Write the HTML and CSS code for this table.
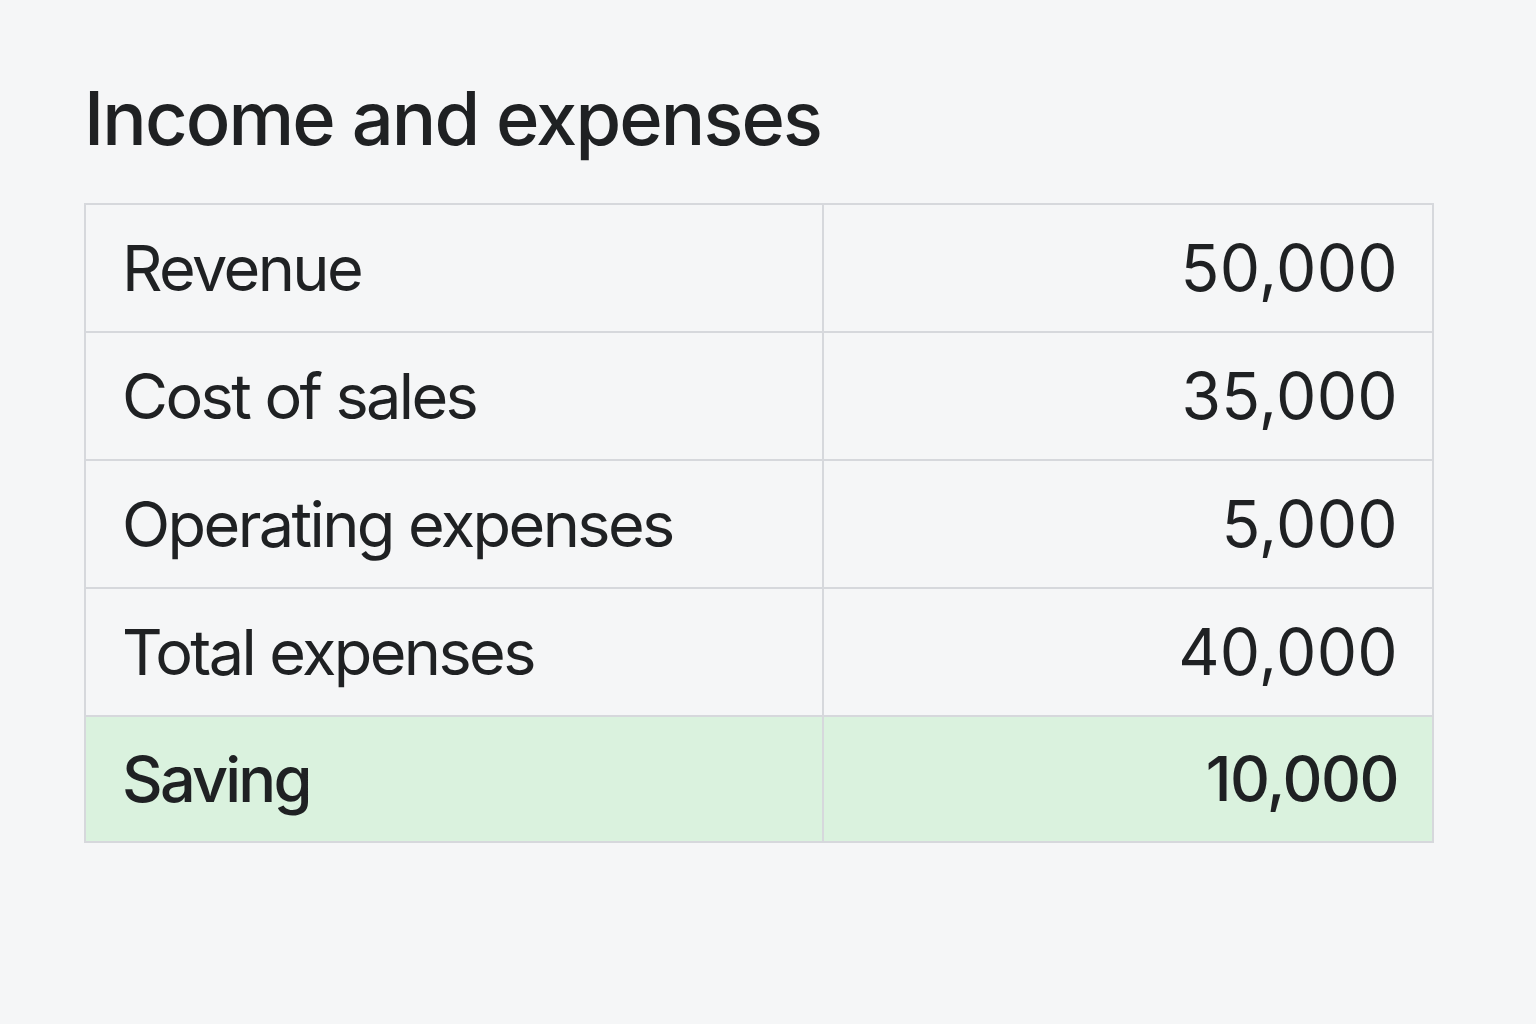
FILE: index.html
```html
<!DOCTYPE html>
<html lang="en">
<head>
<meta charset="utf-8">
<title>Income and expenses</title>
<link rel="stylesheet" href="styles.css">
</head>
<body>
<main class="page">
  <h1 class="title">Income and expenses</h1>
  <table class="ledger">
    <tbody>
      <tr><td class="label">Revenue</td><td class="amount">50,000</td></tr>
      <tr><td class="label">Cost of sales</td><td class="amount">35,000</td></tr>
      <tr><td class="label">Operating expenses</td><td class="amount">5,000</td></tr>
      <tr><td class="label">Total expenses</td><td class="amount">40,000</td></tr>
      <tr class="total"><td class="label">Saving</td><td class="amount">10,000</td></tr>
    </tbody>
  </table>
</main>
</body>
</html>
```
FILE: styles.css
```css
html, body {
  margin: 0;
  padding: 0;
  background: #f5f6f7;
  color: #1f2123;
  font-family: Inter, "Liberation Sans", sans-serif;
}
.page {
  padding: 77px 102px 0 84px;
}
.title {
  margin: 0 0 44px;
  font-size: 74px;
  font-weight: 500;
  line-height: 82px;
  letter-spacing: -1.9px;
}
.ledger {
  width: 1350px;
  border-collapse: collapse;
  border: 2px solid #d6d8dc;
}
.ledger td {
  border: 2px solid #d6d8dc;
  height: 126px;
  padding: 0 36px;
  font-size: 63px;
  font-weight: 400;
  line-height: 1;
}
.ledger .label {
  width: 664px;
  text-align: left;
  letter-spacing: -2.6px;
}
.ledger .amount {
  text-align: right;
  font-size: 64px;
  letter-spacing: 0.3px;
  padding-right: 34px;
}
.ledger .total td {
  height: 124px;
  background: #daf2de;
  font-weight: 500;
}
.ledger .total .label {
  letter-spacing: -2.8px;
}
.ledger .total .amount {
  font-size: 62px;
  letter-spacing: -1.5px;
}
```
